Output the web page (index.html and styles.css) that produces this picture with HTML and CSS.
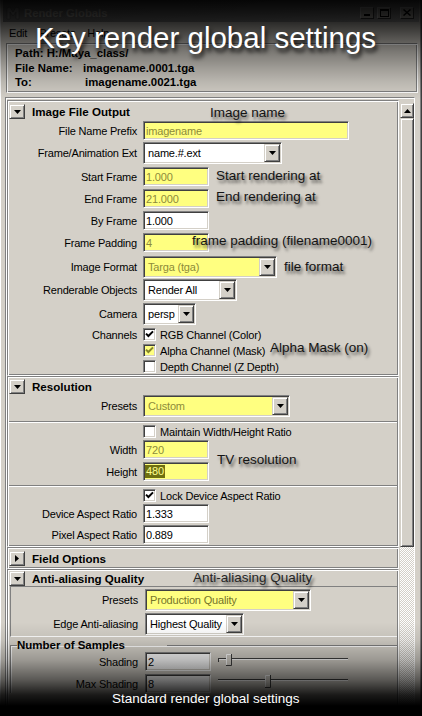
FILE: index.html
```html
<!DOCTYPE html>
<html lang="en">
<head>
<meta charset="utf-8">
<title>Render Globals</title>
<link rel="stylesheet" href="styles.css">
</head>
<body>
<div class="window">
  <div class="titlebar">
    <svg class="app-icon" width="16" height="16" viewBox="0 0 16 16"><path d="M2 14V3l3-1 3 5 3-5 3 1v11h-3V7l-3 4-3-4v7z" fill="#9a9a9a" stroke="#555" stroke-width="0.6"/></svg>
    <span class="title">Render Globals</span>
    <span class="cbtn"><svg width="8" height="7" viewBox="0 0 8 7"><rect x="1" y="5" width="6" height="2" fill="#000"/></svg></span>
    <span class="cbtn"><svg width="9" height="8" viewBox="0 0 9 8"><rect x="0.5" y="0.5" width="8" height="7" fill="none" stroke="#000"/><rect x="0" y="1" width="9" height="1" fill="#000"/></svg></span>
    <span class="cbtn close"><svg width="8" height="7" viewBox="0 0 8 7"><path d="M0.5 0.5l7 6M7.5 0.5l-7 6" stroke="#000" stroke-width="1.5"/></svg></span>
  </div>
  <div class="menubar"><span>Edit</span><span>Presets</span><span>Help</span></div>
  <div class="infobox">
    <div>Path: H:/Maya_class/</div>
    <div><span class="info-label">File Name:</span>imagename.0001.tga</div>
    <div><span class="info-label wide">To:</span>imagename.0021.tga</div>
  </div>
  <div class="panel">
    <div class="scroll-content">
      <section class="frame s-output">
        <div class="head">
          <span class="tog"><svg width="7" height="4" viewBox="0 0 7 4"><polygon points="0,0 7,0 3.5,4" fill="#000"/></svg></span>
          <span class="head-title">Image File Output</span>
        </div>
        <div class="row h19"><span class="lbl">File Name Prefix</span><span class="tf key w206">imagename</span></div>
        <div class="row h22 mt2"><span class="lbl">Frame/Animation Ext</span><span class="dd w139"><span class="val">name.#.ext</span><span class="arr"><svg width="7" height="4" viewBox="0 0 7 4"><polygon points="0,0 7,0 3.5,4" fill="#000"/></svg></span></span></div>
        <div class="row h19 mt3"><span class="lbl">Start Frame</span><span class="tf key w66">1.000</span></div>
        <div class="row h19 mt3"><span class="lbl">End Frame</span><span class="tf key w66">21.000</span></div>
        <div class="row h19 mt3"><span class="lbl">By Frame</span><span class="tf w66">1.000</span></div>
        <div class="row h19 mt3"><span class="lbl">Frame Padding</span><span class="tf key w66">4</span></div>
        <div class="row h22 mt4"><span class="lbl">Image Format</span><span class="dd key w134"><span class="val">Targa (tga)</span><span class="arr"><svg width="7" height="4" viewBox="0 0 7 4"><polygon points="0,0 7,0 3.5,4" fill="#000"/></svg></span></span></div>
        <div class="row h22 mt1"><span class="lbl">Renderable Objects</span><span class="dd w94"><span class="val">Render All</span><span class="arr"><svg width="7" height="4" viewBox="0 0 7 4"><polygon points="0,0 7,0 3.5,4" fill="#000"/></svg></span></span></div>
        <div class="row h22 mt2"><span class="lbl">Camera</span><span class="dd w53"><span class="val">persp</span><span class="arr"><svg width="7" height="4" viewBox="0 0 7 4"><polygon points="0,0 7,0 3.5,4" fill="#000"/></svg></span></span></div>
        <div class="row h13 mt3"><span class="lbl">Channels</span><span class="cb"><svg width="9" height="9" viewBox="0 0 9 9"><path d="M1 3.6L3.4 6 8 1.4" fill="none" stroke="#000" stroke-width="2"/></svg></span><span class="cb-text">RGB Channel (Color)</span></div>
        <div class="row h13 mt3 indent"><span class="cb key"><svg width="9" height="9" viewBox="0 0 9 9"><path d="M1 3.6L3.4 6 8 1.4" fill="none" stroke="#85852a" stroke-width="2"/></svg></span><span class="cb-text">Alpha Channel (Mask)</span></div>
        <div class="row h13 mt3 indent"><span class="cb"></span><span class="cb-text">Depth Channel (Z Depth)</span></div>
      </section>

      <section class="frame s-res">
        <div class="head">
          <span class="tog"><svg width="7" height="4" viewBox="0 0 7 4"><polygon points="0,0 7,0 3.5,4" fill="#000"/></svg></span>
          <span class="head-title">Resolution</span>
        </div>
        <div class="row h22"><span class="lbl">Presets</span><span class="dd key w147"><span class="val">Custom</span><span class="arr"><svg width="7" height="4" viewBox="0 0 7 4"><polygon points="0,0 7,0 3.5,4" fill="#000"/></svg></span></span></div>
        <div class="sep mt4"></div>
        <div class="row h13 mt2 indent"><span class="cb"></span><span class="cb-text">Maintain Width/Height Ratio</span></div>
        <div class="row h19 mt2"><span class="lbl">Width</span><span class="tf key w66">720</span></div>
        <div class="row h19 mt3"><span class="lbl">Height</span><span class="tf key w66"><span class="sel">480</span></span></div>
        <div class="sep mt4"></div>
        <div class="row h13 mt2 indent"><span class="cb"><svg width="9" height="9" viewBox="0 0 9 9"><path d="M1 3.6L3.4 6 8 1.4" fill="none" stroke="#000" stroke-width="2"/></svg></span><span class="cb-text">Lock Device Aspect Ratio</span></div>
        <div class="row h19 mt2"><span class="lbl">Device Aspect Ratio</span><span class="tf w66">1.333</span></div>
        <div class="row h19 mt2"><span class="lbl">Pixel Aspect Ratio</span><span class="tf w66">0.889</span></div>
      </section>

      <section class="frame s-field">
        <div class="head">
          <span class="tog"><svg width="4" height="7" viewBox="0 0 4 7"><polygon points="0,0 4,3.5 0,7" fill="#000"/></svg></span>
          <span class="head-title">Field Options</span>
        </div>
      </section>

      <section class="frame s-aa">
        <div class="head">
          <span class="tog"><svg width="7" height="4" viewBox="0 0 7 4"><polygon points="0,0 7,0 3.5,4" fill="#000"/></svg></span>
          <span class="head-title">Anti-aliasing Quality</span>
        </div>
        <div class="inset">
          <div class="row h22"><span class="lbl">Presets</span><span class="dd key w166"><span class="val dark">Production Quality</span><span class="arr"><svg width="7" height="4" viewBox="0 0 7 4"><polygon points="0,0 7,0 3.5,4" fill="#000"/></svg></span></span></div>
          <div class="row h22 mt2"><span class="lbl">Edge Anti-aliasing</span><span class="dd w99"><span class="val">Highest Quality</span><span class="arr"><svg width="7" height="4" viewBox="0 0 7 4"><polygon points="0,0 7,0 3.5,4" fill="#000"/></svg></span></span></div>
        </div>
        <fieldset class="group">
          <legend>Number of Samples</legend>
          <div class="row h19"><span class="lbl">Shading</span><span class="tf w66">2</span>
            <svg class="slider" width="131" height="19" viewBox="0 0 131 19"><line x1="0" y1="6.5" x2="130" y2="6.5" stroke="#404040"/><line x1="0" y1="7.5" x2="130" y2="7.5" stroke="#fff"/><line x1="0.5" y1="6" x2="0.5" y2="10" stroke="#404040"/><rect x="8" y="2" width="6" height="12" fill="#d4d0c8"/><path d="M8.5 14V2.5H13.5" fill="none" stroke="#fff"/><path d="M8 13.5H13.5V2" fill="none" stroke="#404040"/></svg>
          </div>
          <div class="row h19 mt3"><span class="lbl">Max Shading</span><span class="tf w66">8</span>
            <svg class="slider" width="131" height="19" viewBox="0 0 131 19"><line x1="0" y1="5.5" x2="130" y2="5.5" stroke="#404040"/><line x1="0" y1="6.5" x2="130" y2="6.5" stroke="#fff"/><rect x="47" y="1" width="6" height="13" fill="#d4d0c8"/><path d="M47.5 14V1.5H52.5" fill="none" stroke="#fff"/><path d="M47 13.5H52.5V1" fill="none" stroke="#404040"/></svg>
          </div>
        </fieldset>
      </section>
    </div>
    <div class="scrollbar">
      <span class="sb-btn"><svg width="7" height="4" viewBox="0 0 7 4"><polygon points="0,4 7,4 3.5,0" fill="#000"/></svg></span>
      <span class="sb-thumb"></span>
      <span class="sb-track"></span>
    </div>
  </div>

  <span class="note n-image">Image name</span>
  <span class="note n-start">Start rendering at</span>
  <span class="note n-end">End rendering at</span>
  <span class="note n-pad">frame padding (filename0001)</span>
  <span class="note n-format">file format</span>
  <span class="note n-alpha">Alpha Mask (on)</span>
  <span class="note n-tv">TV resolution</span>
  <span class="note n-aa">Anti-aliasing Quality</span>

  <div class="shade"></div>
  <div class="headline">Key render global settings</div>
  <div class="caption">Standard render global settings</div>
</div>
</body>
</html>
```

FILE: styles.css
```css
* { box-sizing: border-box; }
html, body { margin: 0; padding: 0; background: #000; }
body {
  font-family: "Liberation Sans", Arial, sans-serif;
  font-size: 11px;
  color: #000;
}

.window {
  position: relative;
  width: 422px;
  height: 716px;
  overflow: hidden;
  background: #d4d0c8;
  display: flex;
  flex-direction: column;
  box-shadow: inset 1px 0 #fff, inset -1px 0 #404040, inset -2px 0 #808080;
}

/* title bar */
.titlebar {
  flex: none;
  height: 22px;
  margin: 0 3px;
  padding: 3px 5px 0 2px;
  display: flex;
  align-items: center;
  gap: 3px;
  background: linear-gradient(90deg, #7c7c7c, #a8a8a8);
}
.app-icon { flex: none; }
.title {
  flex: 1;
  font-weight: bold;
  font-size: 11.3px;
  color: #d4d0c8;
}
.cbtn {
  width: 14px;
  height: 12px;
  flex: none;
  display: flex;
  align-items: center;
  justify-content: center;
  background: #d4d0c8;
  border: 1px solid;
  border-color: #fff #404040 #404040 #fff;
}
.cbtn.close { margin-left: 6px; }

/* menu */
.menubar {
  flex: none;
  height: 19px;
  display: flex;
  align-items: center;
  gap: 12px;
  padding: 2px 0 0 9px;
  letter-spacing: -0.18px;
}

/* info box */
.infobox {
  flex: none;
  height: 50px;
  margin: 2px 4px 0 6px;
  padding: 2px 0 0 8px;
  border: 1px solid;
  border-color: #808080 #fff #fff #808080;
  box-shadow: inset 1px 1px #fff, inset -1px -1px #808080;
  font-weight: bold;
  font-size: 11.4px;
  line-height: 14.5px;
}
.info-label { display: inline-block; width: 68px; }
.info-label.wide { width: 70px; }

/* main panel */
.panel {
  flex: 1;
  min-height: 0;
  margin: 4px 0 0 5px;
  width: 410px;
  display: flex;
  border-top: 1px solid #808080;
  border-left: 1px solid #808080;
  border-right: 1px solid #fff;
  box-shadow: inset 1px 1px #fff;
}
.scroll-content {
  width: 394px;
  flex: none;
  padding: 2px 0 0 1px;
  overflow: hidden;
  display: flex;
  flex-direction: column;
}

.frame {
  width: 392px;
  flex: none;
  display: flex;
  flex-direction: column;
  border-top: 1px solid #808080;
  border-left: 1px solid #808080;
  border-right: 1px solid #fff;
  border-bottom: 1px solid #fff;
  box-shadow: inset 1px 1px #fff, inset -1px -1px #808080;
  padding: 1px;
}
.s-output { padding-bottom: 2px; }
.s-res { padding-bottom: 2px; }
.s-aa { flex: 1; border-bottom: none; }

.head {
  display: flex;
  align-items: center;
  gap: 7px;
  height: 19px;
}
.s-res .head { height: 17px; }
.s-field .head { height: 18px; }
.s-aa .head { height: 15px; }
.head-title {
  font-weight: bold;
  font-size: 11.6px;
}
.tog {
  width: 16px;
  height: 15px;
  flex: none;
  display: flex;
  align-items: center;
  justify-content: center;
  background: #d4d0c8;
  border: 1px solid;
  border-color: #d4d0c8 #404040 #404040 #d4d0c8;
  box-shadow: inset 1px 1px #fff, inset -1px -1px #808080;
}

/* rows */
.row {
  display: flex;
  align-items: center;
  flex: none;
  letter-spacing: -0.18px;
  white-space: nowrap;
}
.h13 { height: 13px; }
.h19 { height: 19px; }
.h22 { height: 22px; }
.mt1 { margin-top: 1px; }
.mt2 { margin-top: 2px; }
.mt3 { margin-top: 3px; }
.mt4 { margin-top: 4px; }
.indent { padding-left: 134px; }
.lbl {
  width: 128px;
  margin-right: 6px;
  flex: none;
  text-align: right;
}

.tf {
  height: 19px;
  flex: none;
  display: flex;
  align-items: center;
  padding: 0 2px;
  background: #fff;
  border: 1px solid;
  border-color: #808080 #fff #fff #808080;
  box-shadow: inset 1px 1px #404040, inset -1px -1px #d4d0c8;
  overflow: hidden;
}
.sel {
  background: #6f6f10;
  color: #ffff90;
  line-height: 13px;
  padding: 0 1px;
  margin-left: -1px;
}

.dd {
  height: 22px;
  flex: none;
  display: flex;
  padding: 1px;
  background: #fff;
  border: 1px solid;
  border-color: #808080 #fff #fff #808080;
  box-shadow: inset 1px 1px #404040, inset -1px -1px #d4d0c8;
}
.dd .val {
  flex: 1;
  padding-left: 3px;
  line-height: 18px;
  overflow: hidden;
}
.arr {
  width: 16px;
  height: 18px;
  flex: none;
  display: flex;
  align-items: center;
  justify-content: center;
  background: #d4d0c8;
  border: 1px solid;
  border-color: #d4d0c8 #404040 #404040 #d4d0c8;
  box-shadow: inset 1px 1px #fff, inset -1px -1px #808080;
}

/* keyed (yellow) attributes */
.tf.key, .dd.key, .cb.key { background: #ffff80; color: #8d8b3a; }
.dd .val.dark { color: #76752a; }

.w53 { width: 53px; }
.w66 { width: 66px; }
.w94 { width: 94px; }
.w99 { width: 99px; }
.w134 { width: 134px; }
.w139 { width: 139px; }
.w147 { width: 147px; }
.w166 { width: 166px; }
.w206 { width: 206px; }

.cb {
  width: 13px;
  height: 13px;
  flex: none;
  display: flex;
  align-items: center;
  justify-content: center;
  background: #fff;
  border: 1px solid;
  border-color: #808080 #fff #fff #808080;
  box-shadow: inset 1px 1px #404040, inset -1px -1px #d4d0c8;
}
.cb-text { margin-left: 4px; color: #000; }

.sep {
  height: 2px;
  flex: none;
  border-top: 1px solid #808080;
  border-bottom: 1px solid #fff;
}

/* anti-aliasing */
.inset {
  margin-left: 1px;
  padding: 2px 0 1px;
  border-top: 1px solid #808080;
  border-left: 1px solid #808080;
  border-bottom: 1px solid #fff;
  display: flex;
  flex-direction: column;
}
.inset .lbl, .group .lbl { width: 127px; margin-right: 7px; }

.group {
  margin: 1px 0 0 1px;
  padding: 0;
  min-width: 0;
  border: none;
  border-top: 1px solid #808080;
  border-left: 1px solid #808080;
  box-shadow: inset 1px 1px #fff;
}
.group legend {
  margin-left: 6px;
  padding: 0;
  width: 150px;
  font-weight: bold;
  font-size: 11.5px;
  line-height: 14px;
}
.slider { margin-left: 7px; flex: none; }

/* scrollbar */
.scrollbar {
  width: 14px;
  flex: none;
  display: flex;
  flex-direction: column;
  padding-top: 5px;
}
.sb-btn, .sb-thumb {
  flex: none;
  background: #d4d0c8;
  border: 1px solid;
  border-color: #d4d0c8 #404040 #404040 #d4d0c8;
  box-shadow: inset 1px 1px #fff, inset -1px -1px #808080;
}
.sb-btn {
  height: 15px;
  display: flex;
  align-items: center;
  justify-content: center;
}
.sb-thumb { height: 429px; }
.sb-track {
  flex: 1;
  background: repeating-conic-gradient(#fff 0 25%, #d4d0c8 0 50%) 0 0 / 2px 2px;
}

/* annotations */
.note {
  position: absolute;
  font-size: 13.5px;
  line-height: 16px;
  color: #141414;
  white-space: nowrap;
  text-shadow: 2px 3px 3px rgba(0, 0, 0, 0.6);
}
.n-image { left: 210px; top: 105px; }
.n-start { left: 216px; top: 168px; }
.n-end { left: 216px; top: 189px; }
.n-pad { left: 192px; top: 233px; }
.n-format { left: 284px; top: 259px; }
.n-alpha { left: 270px; top: 340px; }
.n-tv { left: 217px; top: 452px; }
.n-aa { left: 193px; top: 570px; color: #262626; }

/* dark vignette */
.shade {
  position: absolute;
  inset: 0;
  pointer-events: none;
  background: linear-gradient(to bottom,
    rgba(0,0,0,0.96) 0px,
    rgba(0,0,0,0.88) 12px,
    rgba(0,0,0,0.8) 22px,
    rgba(0,0,0,0.7) 30px,
    rgba(0,0,0,0.42) 52px,
    rgba(0,0,0,0.25) 68px,
    rgba(0,0,0,0.12) 82px,
    rgba(0,0,0,0) 100px,
    rgba(0,0,0,0) 622px,
    rgba(0,0,0,0.08) 640px,
    rgba(0,0,0,0.27) 660px,
    rgba(0,0,0,0.58) 680px,
    rgba(0,0,0,0.88) 695px,
    #000 706px);
}

.headline {
  position: absolute;
  left: 35px;
  top: 21px;
  font-size: 29.5px;
  line-height: 34px;
  color: #fff;
  white-space: nowrap;
  text-shadow: 2px 4px 4px rgba(0, 0, 0, 0.9);
}
.caption {
  position: absolute;
  left: 112px;
  top: 691px;
  font-size: 13.5px;
  line-height: 16px;
  color: #fff;
  white-space: nowrap;
}
```
